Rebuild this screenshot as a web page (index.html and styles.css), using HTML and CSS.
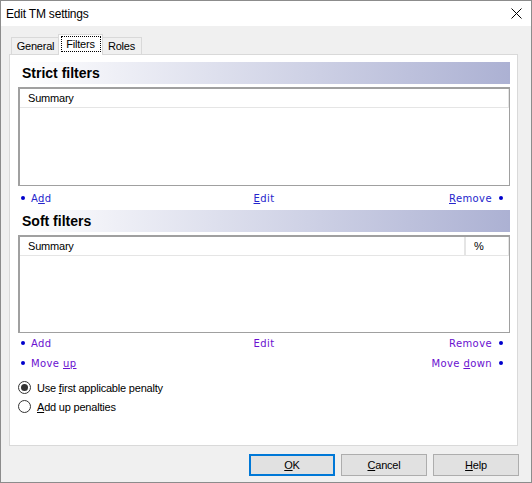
FILE: index.html
```html
<!DOCTYPE html>
<html>
<head>
<meta charset="utf-8">
<link rel="stylesheet" href="styles.css">
</head>
<body>
<div class="window">
  <div class="titlebar">
    <span class="title">Edit TM settings</span>
    <svg class="close" width="11" height="11" viewBox="0 0 11 11"><path d="M0.5 0.5L10.5 10.5M10.5 0.5L0.5 10.5" stroke="#000" stroke-width="1" fill="none"/></svg>
  </div>
  <div class="body">
    <div class="tabs">
      <div class="tab tab-general">General</div>
      <div class="tab tab-active"><span class="focus">Filters</span></div>
      <div class="tab tab-roles">Roles</div>
    </div>
    <div class="panel">
      <div class="section-head">Strict filters</div>
      <div class="list list-strict">
        <div class="list-header">
          <div class="col col-summary">Summary</div>
        </div>
      </div>
      <div class="links links-strict link-row-tall">
        <span class="link link-left"><span class="dot"></span><span>A<u>d</u>d</span></span>
        <span class="link"><span><u>E</u>dit</span></span>
        <span class="link link-right"><span><u>R</u>emove</span><span class="dot dot-right"></span></span>
      </div>
      <div class="section-head">Soft filters</div>
      <div class="list list-soft">
        <div class="list-header">
          <div class="col col-summary">Summary</div>
          <div class="col col-pct">%</div>
        </div>
      </div>
      <div class="links links-soft">
        <span class="link link-left"><span class="dot"></span><span>Add</span></span>
        <span class="link"><span>Edit</span></span>
        <span class="link link-right"><span>Remove</span><span class="dot dot-right"></span></span>
      </div>
      <div class="links links-soft">
        <span class="link link-left"><span class="dot"></span><span>Move <u>up</u></span></span>
        <span class="link"></span>
        <span class="link link-right"><span>Move <u>d</u>own</span><span class="dot dot-right"></span></span>
      </div>
      <div class="radios">
        <div class="radio-row"><span class="radio radio-checked"></span><span>Use <u>f</u>irst applicable penalty</span></div>
        <div class="radio-row"><span class="radio"></span><span><u>A</u>dd up penalties</span></div>
      </div>
    </div>
    <div class="buttons">
      <div class="btn btn-default"><span><u>O</u>K</span></div>
      <div class="btn"><span><u>C</u>ancel</span></div>
      <div class="btn"><span><u>H</u>elp</span></div>
    </div>
  </div>
</div>
</body>
</html>
```
FILE: styles.css
```css
html, body {
  margin: 0;
  padding: 0;
  background: #f0f0f0;
}

.window {
  width: 532px;
  height: 483px;
  box-sizing: border-box;
  border: 1px solid #8c8c8c;
  background: #f0f0f0;
  display: flex;
  flex-direction: column;
  font-family: "Liberation Sans", Arial, sans-serif;
  font-size: 11px;
  letter-spacing: -0.2px;
  color: #000;
}

u {
  text-decoration: underline;
  text-underline-offset: 1px;
}

.titlebar {
  height: 25px;
  flex: none;
  background: #fff;
  display: flex;
  align-items: center;
  justify-content: space-between;
  padding: 0 9px 0 5px;
}

.title {
  font-size: 12px;
}

.close {
  display: block;
}

.body {
  flex: 1;
  display: flex;
  flex-direction: column;
  padding: 8px 12px 0 8px;
}

.tabs {
  display: flex;
  align-items: flex-end;
  height: 20px;
  padding-left: 2px;
}

.tab {
  height: 17px;
  box-sizing: border-box;
  border: 1px solid #d9d9d9;
  border-bottom: none;
  background: #f0f0f0;
  display: flex;
  align-items: center;
  justify-content: center;
}

.tab-general {
  width: 49px;
}

.tab-roles {
  width: 41px;
}

.tab-active {
  width: 45px;
  height: 21px;
  margin: 0 -2px -1px;
  background: #fff;
  position: relative;
  z-index: 1;
  align-items: flex-start;
  padding-top: 1px;
}

.focus {
  width: 40px;
  height: 16px;
  box-sizing: border-box;
  border: 1px dotted #000;
  display: flex;
  align-items: center;
  justify-content: center;
}

.panel {
  width: 509px;
  height: 392px;
  box-sizing: border-box;
  border: 1px solid #d9d9d9;
  background: #fff;
  padding: 7px 7px 0 8px;
  display: flex;
  flex-direction: column;
}

.section-head {
  height: 22px;
  flex: none;
  background: linear-gradient(to right, #ffffff, #acb1d3);
  font-size: 14px;
  font-weight: bold;
  letter-spacing: 0;
  padding-left: 4px;
  display: flex;
  align-items: center;
}

.list {
  margin-top: 3px;
  box-sizing: border-box;
  border-style: solid;
  border-color: #a0a0a0;
  border-width: 2px 1px 1px 2px;
  background: #fff;
  flex: none;
}

.list-strict {
  height: 99px;
}

.list-soft {
  height: 98px;
}

.list-header {
  height: 19px;
  box-sizing: border-box;
  border-bottom: 1px solid #e5e5e5;
  display: flex;
}

.col {
  display: flex;
  align-items: center;
  box-sizing: border-box;
  border-right: 1px solid #e5e5e5;
}

.col-summary {
  flex: 1;
  padding-left: 8px;
}

.col-pct {
  width: 44px;
  padding-left: 8px;
  border-left: 1px solid #e5e5e5;
}

.links {
  display: grid;
  grid-template-columns: 1fr auto 1fr;
  align-items: center;
  height: 20px;
  padding: 0 3px;
  font-family: "DejaVu Sans", Verdana, sans-serif;
  font-size: 10px;
  letter-spacing: 0.4px;
  flex: none;
}

.link-row-tall {
  height: 24px;
}

.links-strict {
  color: #2525cc;
}

.links-soft {
  color: #6a10d0;
}

.link {
  display: flex;
  align-items: center;
}

.link-left {
  justify-content: flex-start;
}

.link-right {
  justify-content: flex-end;
  padding-right: 4px;
}

.dot {
  width: 4px;
  height: 4px;
  border-radius: 50%;
  background: #0000cc;
  margin-right: 6px;
  flex: none;
}

.dot-right {
  margin-right: 0;
  margin-left: 7px;
}

.radios {
  margin-top: 5px;
  display: flex;
  flex-direction: column;
}

.radio-row {
  height: 19px;
  display: flex;
  align-items: center;
  gap: 6px;
}

.radio {
  width: 13px;
  height: 13px;
  box-sizing: border-box;
  border: 1px solid #333;
  border-radius: 50%;
  background: #fff;
  display: flex;
  align-items: center;
  justify-content: center;
}

.radio-checked::after {
  content: "";
  width: 7px;
  height: 7px;
  border-radius: 50%;
  background: #333;
}

.buttons {
  display: flex;
  justify-content: flex-end;
  gap: 6px;
  margin-top: 8px;
}

.btn {
  width: 86px;
  height: 22px;
  box-sizing: border-box;
  border: 1px solid #adadad;
  background: #e1e1e1;
  display: flex;
  align-items: center;
  justify-content: center;
}

.btn-default {
  border: 2px solid #0078d7;
}
```
